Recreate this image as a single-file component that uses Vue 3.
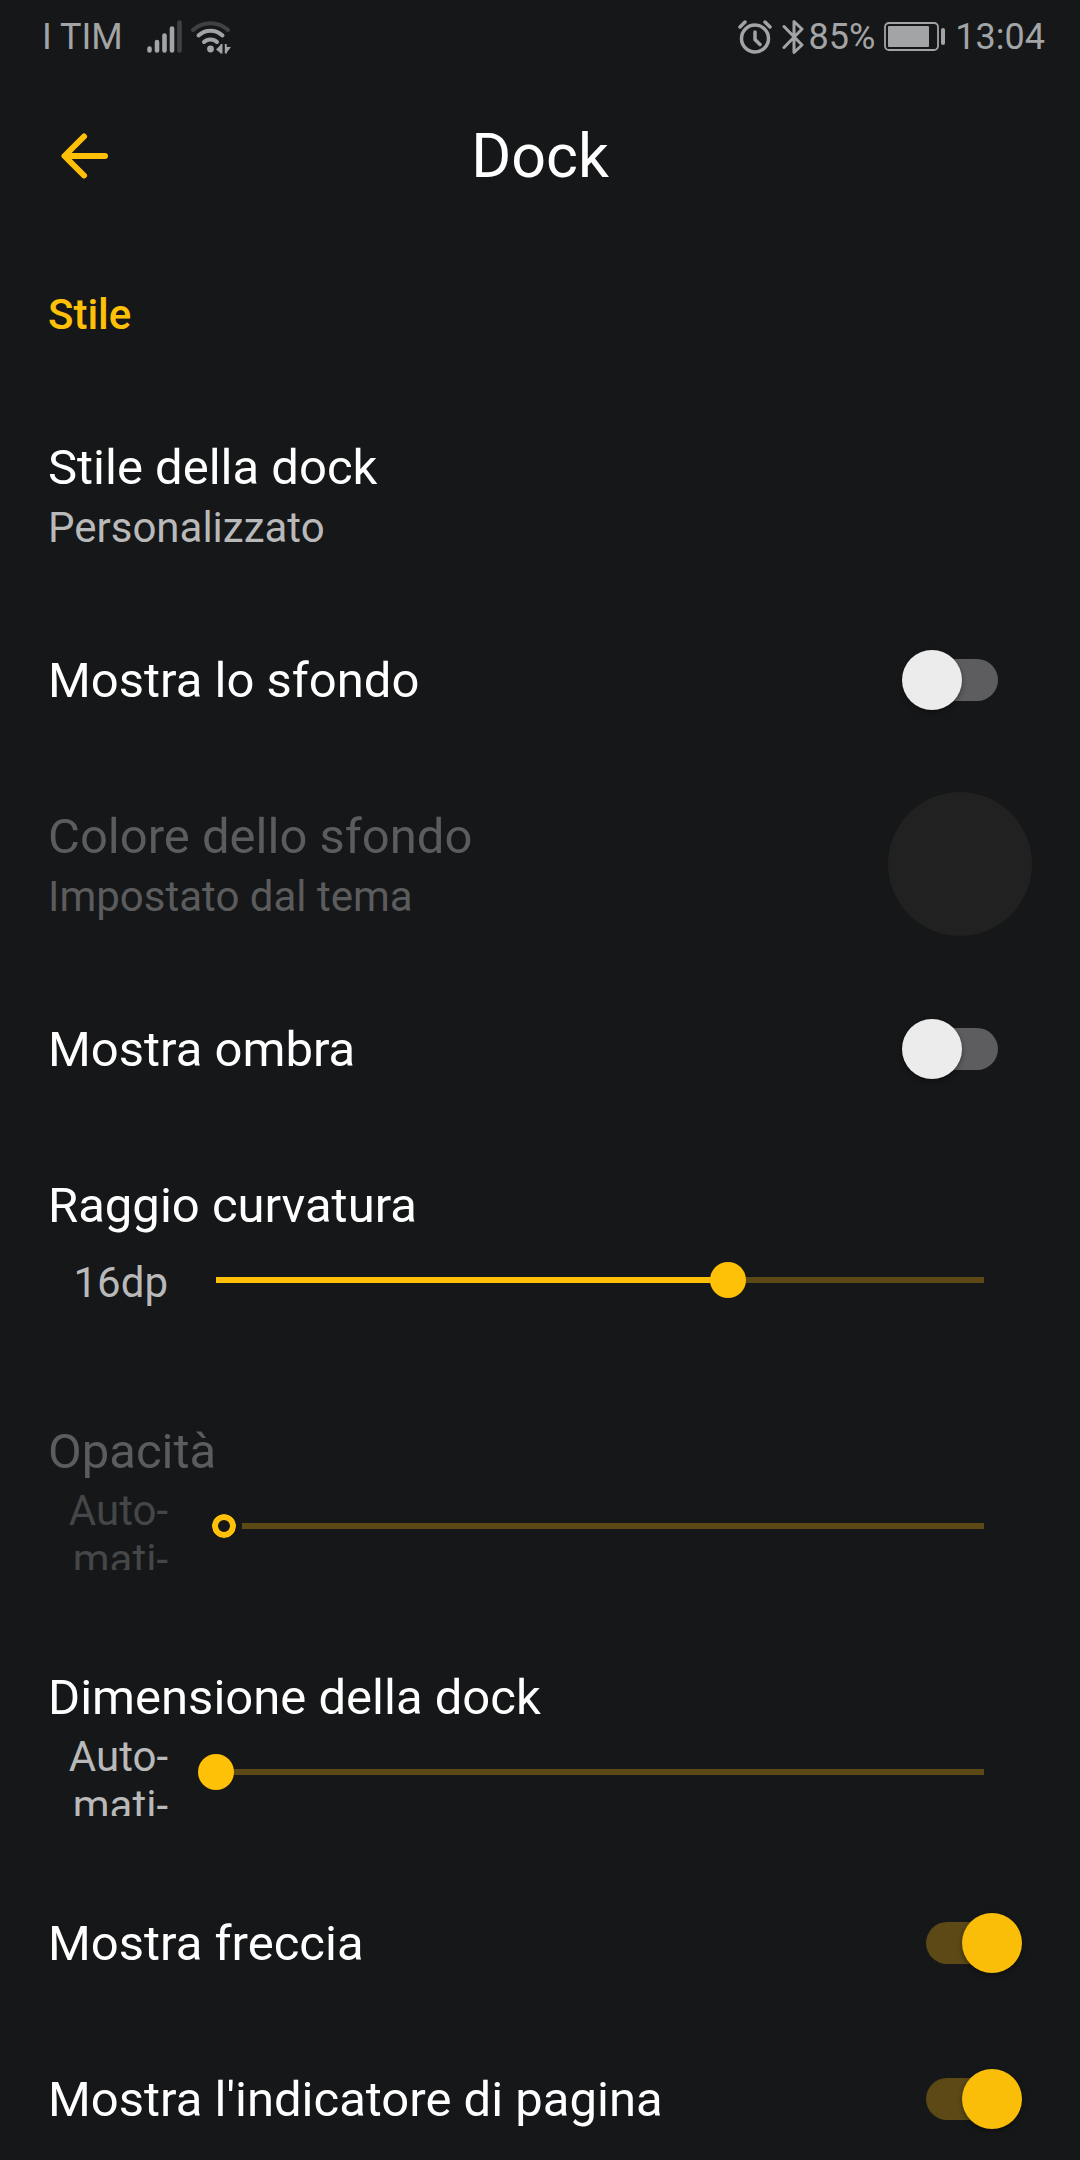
<template>
  <div class="screen">
    <div class="status-bar">
      <div class="status-group">
        <span>I TIM</span>
        <svg class="icon-signal" viewBox="0 0 35 34" width="35" height="34" fill="none" stroke="currentColor" stroke-width="4.600" stroke-linecap="round">
          <path d="M2.500 28.500v2M10 22v8.500M17.500 15.500v15M25 8.500v22" />
          <path d="M32.500 2.500v28" opacity="0.3" />
        </svg>
        <svg class="icon-wifi" viewBox="0 0 40 34" width="40" height="34" fill="none" stroke="currentColor" stroke-width="4" stroke-linecap="round">
          <path d="M2 10c10-9 25-9 35 0" opacity="0.3" />
          <path d="M7.500 15.500c7-6.500 17-6.500 24 0" />
          <path d="M13 22c3.500-3.500 9.500-3.500 13 0" />
          <path d="M25 29.500l5-5v9zM40 27h-5v6.500z" fill="currentColor" stroke="none" />
          <path d="M30.500 24v9.500M34.800 24v9.500" stroke-width="2" stroke-linecap="butt" />
          <circle cx="19.500" cy="29" r="3.400" fill="currentColor" stroke="none" />
        </svg>
      </div>
      <div class="status-group">
        <svg class="icon-alarm" viewBox="0 0 34 34" width="34" height="34" fill="none" stroke="currentColor" stroke-width="3.500" stroke-linecap="round">
          <circle cx="17" cy="18.500" r="13.500" />
          <path d="M17 12v7.500l5 5M2 7l5-5M32 7l-5-5" />
        </svg>
        <svg class="icon-bluetooth" viewBox="0 0 22 36" width="22" height="36" fill="none" stroke="currentColor" stroke-width="3" stroke-linejoin="round" stroke-linecap="round">
          <path d="M2 7.500l18 18.500-8 7.500v-31l8 7.500L2 28.500" />
        </svg>
        <span>85%</span>
        <svg class="icon-battery" viewBox="0 0 62 30" width="62" height="30">
          <rect x="1" y="1" width="53" height="27" rx="4" fill="none" stroke="currentColor" stroke-width="1.800" />
          <rect x="4" y="4" width="41" height="21" rx="1" fill="currentColor" />
          <rect x="57" y="6" width="4" height="17" rx="2" fill="currentColor" />
        </svg>
        <span>13:04</span>
      </div>
    </div>

    <header class="app-bar">
      <button class="back" type="button" aria-label="Indietro">
        <svg viewBox="0 0 48 48" width="48" height="48" fill="none" stroke="currentColor" stroke-width="6" stroke-linecap="round" stroke-linejoin="round">
          <path d="M24 4.500L4.500 24 24 43.500M5 24H45" />
        </svg>
      </button>
      <h1>Dock</h1>
    </header>

    <main>
      <h2 class="section">Stile</h2>
      <template v-for="item in items" :key="item.id">
        <button v-if="item.type === 'link'" type="button" class="row" :disabled="item.disabled">
          <span class="texts">
            <span class="title">{{ item.title }}</span>
            <span class="summary">{{ item.summary }}</span>
          </span>
          <span v-if="item.swatch" class="swatch" :style="{ background: item.swatch }"></span>
        </button>

        <label v-else-if="item.type === 'switch'" class="row switch-row">
          <span class="title">{{ item.title }}</span>
          <input v-model="item.value" type="checkbox" role="switch" class="switch" />
        </label>

        <div v-else class="row slider-row" :class="{ disabled: item.disabled }">
          <label class="title" :for="item.id">{{ item.title }}</label>
          <div class="control">
            <output class="value" :for="item.id">{{ label(item) }}</output>
            <input
              :id="item.id"
              v-model.number="item.value"
              class="slider"
              type="range"
              min="0"
              :max="item.max"
              :disabled="item.disabled"
              :style="{ '--fill': (item.value / item.max) * 100 + '%' }"
            />
          </div>
        </div>
      </template>
    </main>
  </div>
</template>

<script setup>
import { reactive } from 'vue'

const items = reactive([
  { id: 'style', type: 'link', title: 'Stile della dock', summary: 'Personalizzato' },
  { id: 'background', type: 'switch', title: 'Mostra lo sfondo', value: false },
  { id: 'color', type: 'link', title: 'Colore dello sfondo', summary: 'Impostato dal tema', swatch: '#212121', disabled: true },
  { id: 'shadow', type: 'switch', title: 'Mostra ombra', value: false },
  { id: 'radius', type: 'slider', title: 'Raggio curvatura', value: 16, max: 24 },
  { id: 'opacity', type: 'slider', title: 'Opacità', value: 0, max: 100, disabled: true },
  { id: 'size', type: 'slider', title: 'Dimensione della dock', value: 0, max: 100 },
  { id: 'arrow', type: 'switch', title: 'Mostra freccia', value: true },
  { id: 'indicator', type: 'switch', title: "Mostra l'indicatore di pagina", value: true },
])

// soft hyphens let the word break inside the narrow value column
const AUTO = 'Auto\u00ADmati\u00ADco'

const label = (item) => (item.value === 0 ? AUTO : `${item.value}dp`)
</script>

<style>
body {
  margin: 0;
  background: #161718;
}
</style>

<style scoped>
.screen {
  --bg: #161718;
  --accent: #ffc107;
  --accent-dim: #5c4916;
  height: 100vh;
  overflow: hidden auto;
  scrollbar-width: none;
  background: var(--bg);
  color: #fff;
  font-family: Roboto, "Noto Sans", sans-serif;
}

.status-bar {
  display: flex;
  justify-content: space-between;
  box-sizing: border-box;
  height: 72px;
  padding: 2px 35px 0 42px;
  color: #a3a4a5;
  font-size: 36px;
}

.status-group {
  display: flex;
  align-items: center;
}

.icon-signal {
  margin: 0 9px 0 24px;
}

.icon-alarm {
  margin-right: 10px;
}

.icon-bluetooth {
  margin-right: 5px;
}

.icon-battery {
  margin: 0 9px;
}

.app-bar {
  display: grid;
  grid-template-columns: 72px 1fr 72px;
  align-items: center;
  height: 168px;
  padding: 0 48px;
}

.app-bar h1 {
  margin: 0;
  font-size: 61px;
  font-weight: 400;
  text-align: center;
}

button {
  border: 0;
  background: none;
  color: inherit;
  font: inherit;
}

.back {
  display: flex;
  align-items: center;
  justify-content: center;
  width: 72px;
  height: 72px;
  padding: 0;
  color: var(--accent);
}

.section {
  margin: 0;
  padding: 0 48px;
  color: var(--accent);
  font-size: 42px;
  font-weight: 500;
  line-height: 150px;
}

.row {
  display: flex;
  align-items: center;
  justify-content: space-between;
  width: 100%;
  box-sizing: border-box;
  padding: 0 48px;
  text-align: left;
}

.texts {
  display: flex;
  flex-direction: column;
  padding: 48px 0 46px;
}

.title {
  font-size: 49px;
  line-height: 60px;
}

.switch-row {
  min-height: 156px;
}

.summary {
  color: #b9b9ba;
  font-size: 42px;
  line-height: 59px;
}

.row:disabled .title,
.row:disabled .summary,
.disabled .title {
  color: #5b5c5d;
}

.swatch {
  width: 144px;
  height: 144px;
  margin-bottom: 4px;
  border-radius: 50%;
}

.switch {
  display: flex;
  align-items: center;
  appearance: none;
  flex: none;
  position: relative;
  width: 120px;
  height: 60px;
  margin: 0 10px 2px;
}

.switch::before {
  content: "";
  width: 72px;
  height: 42px;
  margin: 0 24px;
  border-radius: 21px;
  background: #5d5d5f;
}

.switch::after {
  content: "";
  position: absolute;
  top: 0;
  left: 0;
  width: 60px;
  height: 60px;
  border-radius: 50%;
  background: #ececec;
  box-shadow: 0 2px 5px rgba(0, 0, 0, 0.4);
}

.switch:checked::before {
  background: var(--accent-dim);
}

.switch:checked::after {
  left: 60px;
  background: #fabd08;
}

.slider-row {
  flex-direction: column;
  align-items: stretch;
  gap: 4px;
  padding: 48px 78px 50px 48px;
}

.control {
  display: flex;
  align-items: center;
  gap: 30px;
  height: 84px;
}

.value {
  flex: none;
  width: 120px;
  max-height: 84px;
  overflow: hidden;
  color: #b9b9ba;
  font-size: 42px;
  line-height: 49px;
  text-align: right;
}

.disabled .value {
  color: #454647;
}

.slider {
  appearance: none;
  flex: 1;
  min-width: 0;
  height: 36px;
  margin: 0 0 4px;
  background: linear-gradient(to right, var(--accent) var(--fill), var(--accent-dim) var(--fill)) 18px center / calc(100% - 36px) 6px no-repeat;
}

.slider::-webkit-slider-thumb {
  appearance: none;
  box-sizing: border-box;
  width: 36px;
  height: 36px;
  border: 0;
  border-radius: 50%;
  background: var(--accent);
}

.slider:disabled {
  margin-left: 8px;
}

/* the idle thumb is a ring with a clear gap before the track */
.slider:disabled::-webkit-slider-thumb {
  border: 6px solid var(--bg);
  background: var(--bg);
  box-shadow: inset 0 0 0 6px var(--accent);
}
</style>
